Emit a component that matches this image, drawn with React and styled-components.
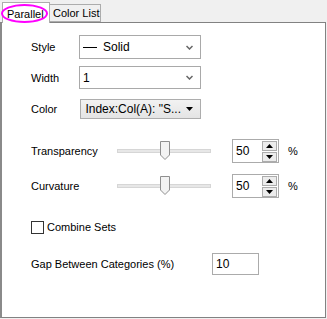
import React from "react";
import styled, { createGlobalStyle } from "styled-components";

const Global = createGlobalStyle`
  html, body {
    margin: 0;
    padding: 0;
    background: #f0f0f0;
  }
  body {
    font-family: "Liberation Sans", Arial, sans-serif;
    font-size: 11px;
    color: #000;
  }
`;

const Window = styled.div`
  position: relative;
  width: 327px;
  height: 319px;
  background: #f0f0f0;
  box-sizing: border-box;
`;

const TabStrip = styled.div`
  display: flex;
  align-items: flex-end;
  height: 22px;
  padding-left: 2px;
  box-sizing: border-box;
`;

const Tab = styled.div`
  box-sizing: border-box;
  width: ${(p) => p.$w}px;
  height: ${(p) => (p.$active ? "21px" : "18px")};
  margin-bottom: ${(p) => (p.$active ? "-1px" : "0")};
  padding: ${(p) => (p.$active ? "2px 0 0 4px" : "0 0 0 3px")};
  background: ${(p) => (p.$active ? "#ffffff" : "#f0f0f0")};
  border: 1px solid #acacac;
  border-left: ${(p) => (p.$active ? "1px solid #acacac" : "none")};
  border-bottom: ${(p) => (p.$active ? "none" : "1px solid #acacac")};
  display: flex;
  align-items: center;
  font-size: 11px;
  white-space: nowrap;
  position: relative;
  z-index: ${(p) => (p.$active ? 2 : 1)};
`;

const Marker = styled.div`
  position: absolute;
  left: 1px;
  top: 4px;
  width: 47px;
  height: 19px;
  border: 2px solid #ff00ff;
  border-radius: 50%;
  box-sizing: border-box;
  z-index: 3;
  pointer-events: none;
`;

const Panel = styled.div`
  box-sizing: border-box;
  width: 326px;
  height: 296px;
  background: #ffffff;
  border: 1px solid #828282;
  border-left: 2px solid #8a8a8a;
  padding: 12px 0 0 29px;
  display: flex;
  flex-direction: column;
`;

const Row = styled.div`
  display: flex;
  align-items: center;
  height: ${(p) => p.$h}px;
  margin-top: ${(p) => p.$mt || 0}px;
`;

const Label = styled.div`
  width: ${(p) => p.$w}px;
  flex-shrink: 0;
  white-space: nowrap;
`;

const Combo = styled.div`
  box-sizing: border-box;
  width: 122px;
  height: 100%;
  border: 1px solid #a9a9a9;
  background: #fff;
  display: flex;
  align-items: center;
  padding: 0 0 0 3px;
  font-size: 12px;
`;

const ComboText = styled.div`
  flex: 1;
  display: flex;
  align-items: center;
  gap: 6px;
`;

const LineSample = styled.span`
  display: inline-block;
  width: 14px;
  height: 1px;
  background: #000;
`;

const Chevron = styled.svg`
  width: 7px;
  height: 5px;
  margin-right: 7px;
`;

const ColorButton = styled.div`
  box-sizing: border-box;
  width: 121px;
  height: 100%;
  margin-left: 1px;
  border: 1px solid #adadad;
  background: linear-gradient(#f2f2f2, #e4e4e4);
  display: flex;
  align-items: center;
  justify-content: flex-end;
  padding-right: 7px;
  gap: 5px;
  font-size: 12px;
`;

const Track = styled.div`
  position: relative;
  width: 94px;
  height: 4px;
  background: #e7e7e7;
  border: 1px solid #d6d6d6;
  box-sizing: border-box;
`;

const Thumb = styled.svg`
  position: absolute;
  left: 42px;
  top: -9px;
  width: 10px;
  height: 19px;
`;

const SpinBox = styled.div`
  box-sizing: border-box;
  width: 47px;
  height: 24px;
  margin-left: 21px;
  border: 1px solid #ababab;
  background: #fff;
  display: flex;
  align-items: flex-start;
  padding: 1px 1px 0 3px;
  font-size: 12px;
`;

const SpinValue = styled.div`
  flex: 1;
  padding-top: 3px;
`;

const SpinButtons = styled.div`
  display: flex;
  flex-direction: column;
  gap: 1px;
  width: 15px;
`;

const SpinBtn = styled.div`
  box-sizing: border-box;
  height: 10px;
  border: 1px solid #acacac;
  background: #ececec;
  display: flex;
  align-items: center;
  justify-content: center;
`;

const Percent = styled.div`
  margin-left: 9px;
  font-size: 11px;
`;

const Check = styled.div`
  box-sizing: border-box;
  width: 13px;
  height: 13px;
  border: 1px solid #333;
  background: #fff;
  margin-right: 3px;
`;

const TextBox = styled.div`
  box-sizing: border-box;
  width: 47px;
  height: 22px;
  border: 1px solid #ababab;
  background: #fff;
  padding: 3px 0 0 3px;
  font-size: 12px;
`;

const Tri = ({ up }) => (
  <svg width="7" height="4" viewBox="0 0 7 4">
    <path d={up ? "M0 4 L3.5 0 L7 4 Z" : "M0 0 L7 0 L3.5 4 Z"} fill="#000" />
  </svg>
);

const SliderRow = ({ label, mt }) => (
  <Row $h={24} $mt={mt}>
    <Label $w={86}>{label}</Label>
    <Track>
      <Thumb viewBox="0 0 10 19">
        <path
          d="M0.5 0.5 H9.5 V14 L5 18.5 L0.5 14 Z"
          fill="#f3f3f3"
          stroke="#8f8f8f"
        />
      </Thumb>
    </Track>
    <SpinBox>
      <SpinValue>50</SpinValue>
      <SpinButtons>
        <SpinBtn>
          <Tri up />
        </SpinBtn>
        <SpinBtn>
          <Tri />
        </SpinBtn>
      </SpinButtons>
    </SpinBox>
    <Percent>%</Percent>
  </Row>
);

const ComboChevron = () => (
  <Chevron viewBox="0 0 7 5">
    <path d="M0.5 1 L3.5 4 L6.5 1" fill="none" stroke="#666" strokeWidth="1.5" />
  </Chevron>
);

export default function App() {
  return (
    <>
      <Global />
      <Window>
        <TabStrip>
          <Tab $active $w={48}>Parallel</Tab>
          <Tab $w={51}>Color List</Tab>
        </TabStrip>
        <Marker />
        <Panel>
          <Row $h={24}>
            <Label $w={48}>Style</Label>
            <Combo>
              <ComboText>
                <LineSample />
                Solid
              </ComboText>
              <ComboChevron />
            </Combo>
          </Row>
          <Row $h={23} $mt={7}>
            <Label $w={48}>Width</Label>
            <Combo>
              <ComboText>1</ComboText>
              <ComboChevron />
            </Combo>
          </Row>
          <Row $h={20} $mt={10}>
            <Label $w={48}>Color</Label>
            <ColorButton>
              Index:Col(A): "S...
              <Tri />
            </ColorButton>
          </Row>
          <SliderRow label="Transparency" mt={20} />
          <SliderRow label="Curvature" mt={11} />
          <Row $h={14} $mt={22}>
            <Check />
            Combine Sets
          </Row>
          <Row $h={22} $mt={19}>
            <Label $w={181}>Gap Between Categories (%)</Label>
            <TextBox>10</TextBox>
          </Row>
        </Panel>
      </Window>
    </>
  );
}
